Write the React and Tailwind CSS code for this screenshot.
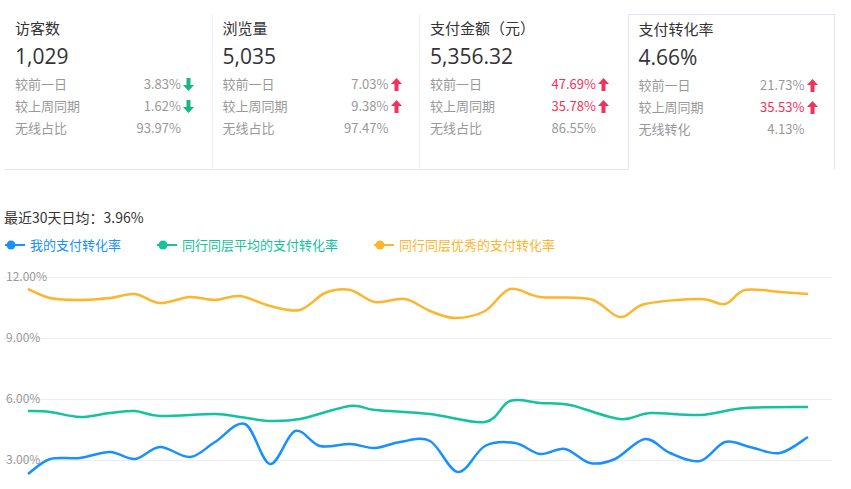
import React from "react";

const F = { fontFamily: '"Microsoft YaHei","Noto Sans CJK SC","Liberation Sans",sans-serif' };

const Up = () => (
  <svg width="11" height="13" viewBox="0 0 11 13" className="ml-[2px]"><path d="M5.5 0 L11 6 H7.5 V13 H3.5 V6 H0 Z" fill="#f5315a" /></svg>
);
const Down = () => (
  <svg width="11" height="13" viewBox="0 0 11 13" className="ml-[2px]"><path d="M5.5 13 L11 7 H7.5 V0 H3.5 V7 H0 Z" fill="#1bb584" /></svg>
);

const cards = [
  { t: "访客数", v: "1,029", r: [["较前一日", "3.83%", "d", false], ["较上周同期", "1.62%", "d", false], ["无线占比", "93.97%", null, false]] },
  { t: "浏览量", v: "5,035", r: [["较前一日", "7.03%", "u", false], ["较上周同期", "9.38%", "u", false], ["无线占比", "97.47%", null, false]] },
  { t: "支付金额（元）", v: "5,356.32", r: [["较前一日", "47.69%", "u", true], ["较上周同期", "35.78%", "u", true], ["无线占比", "86.55%", null, false]] },
  { t: "支付转化率", v: "4.66%", sel: true, r: [["较前一日", "21.73%", "u", false], ["较上周同期", "35.53%", "u", true], ["无线转化", "4.13%", null, false]] },
];

const Y = [[28,288],[50,297],[80,299],[110,297],[135,293],[160,302],[190,296],[215,299],[240,295],[270,305],[300,309],[325,292],[350,289],[375,301],[405,298],[430,310],[455,317],[485,310],[510,288],[540,296],[590,298],[620,316],[645,303],[700,298],[725,303],[745,289],[780,291],[808,293]];
const G = [[28,410],[50,411],[80,416],[110,412],[135,410],[160,415],[215,413],[240,416],[270,420],[300,418],[350,405],[375,409],[430,413],[485,421],[510,400],[540,402],[570,404],[620,418],[650,412],[700,414],[745,407],[808,406]];
const B = [[28,473],[50,458],[80,457],[110,451],[135,458],[160,446],[190,456],[215,441],[245,423],[270,463],[295,430],[320,445],[350,443],[375,447],[400,441],[430,440],[458,471],[485,445],[515,442],[540,453],[565,448],[590,462],[615,458],[645,438],[670,452],[700,460],[725,441],[750,446],[780,452],[808,436]];

function smooth(p, off) {
  const q = p.map(([x, y]) => [x, y - off]);
  let d = `M${q[0][0]},${q[0][1]}`;
  for (let i = 0; i < q.length - 1; i++) {
    const p0 = q[i - 1] || q[i], p1 = q[i], p2 = q[i + 1], p3 = q[i + 2] || p2;
    const c1 = [p1[0] + (p2[0] - p0[0]) / 6, p1[1] + (p2[1] - p0[1]) / 6];
    const c2 = [p2[0] - (p3[0] - p1[0]) / 6, p2[1] - (p3[1] - p1[1]) / 6];
    d += ` C${c1[0]},${c1[1]} ${c2[0]},${c2[1]} ${p2[0]},${p2[1]}`;
  }
  return d;
}

export default function App() {
  const off = 258;
  return (
    <div className="w-[851px] h-[489px] bg-white overflow-hidden relative" style={F}>
      <div className="flex ml-[5px] mt-[14px] w-[830px] h-[156px] border-b border-[#e3e8ee]">
        {cards.map((c, i) => (
          <div key={i} className={`w-[208px] pl-[10px] pt-[4px] ${c.sel ? "bg-white border border-[#dfe5ec] border-b-white -mb-px" : i < 3 && !cards[i + 1]?.sel ? "border-r border-[#eceff3]" : ""}`}>
            <div className="text-[15px] text-[#333] leading-[20px]">{c.t}</div>
            <div className="text-[21px] text-[#333] leading-[28px] mt-[4px]" style={{ fontFamily: '"Open Sans","Liberation Sans",sans-serif' }}>{c.v}</div>
            <div className="mt-[3px]">
              {c.r.map(([l, v, a, red], j) => (
                <div key={j} className="flex items-center h-[22px] text-[13px] text-[#999]">
                  <span className="w-[100px]">{l}</span>
                  <span className={`w-[66px] text-right ${red ? "text-[#f5315a]" : "text-[#999]"}`}>{v}</span>
                  {a === "u" ? <Up /> : a === "d" ? <Down /> : null}
                </div>
              ))}
            </div>
          </div>
        ))}
      </div>
      <div className="mt-[37px] ml-[4px] text-[14px] text-[#333]">最近30天日均&#xFF1A;3.96%</div>
      <div className="flex items-center gap-[36px] mt-[7px] ml-[5px] text-[13px]">
        {[["#1890ff", "我的支付转化率"], ["#13c39d", "同行同层平均的支付转化率"], ["#fdb52b", "同行同层优秀的支付转化率"]].map(([c, t], i) => (
          <div key={i} className="flex items-center" style={{ color: c }}>
            <svg width="20" height="10" className="mr-[5px]"><line x1="0" y1="5" x2="20" y2="5" stroke={c} strokeWidth="2" /><circle cx="6" cy="5" r="4.5" fill={c} /></svg>
            {t}
          </div>
        ))}
      </div>
      <div className="relative h-[231px] mt-[4px]">
        <svg width="851" height="231" className="absolute left-0 top-0">
          {[276, 337, 398, 459].map((y) => (
            <line key={y} x1="4" x2="832" y1={y - off + 0.5} y2={y - off + 0.5} stroke="#eeeeee" />
          ))}
          <path d={smooth(Y, off)} fill="none" stroke="#fdb52b" strokeWidth="2.5" />
          <path d={smooth(G, off)} fill="none" stroke="#13c39d" strokeWidth="2.5" />
          <path d={smooth(B, off)} fill="none" stroke="#1890ff" strokeWidth="2.5" />
        </svg>
        {[["12.00%", 276], ["9.00%", 337], ["6.00%", 398], ["3.00%", 459]].map(([t, y]) => (
          <div key={t} className="absolute left-[6px] text-[12px] text-[#999] leading-[14px]" style={{ top: y - off - 8 }}>{t}</div>
        ))}
      </div>
    </div>
  );
}
